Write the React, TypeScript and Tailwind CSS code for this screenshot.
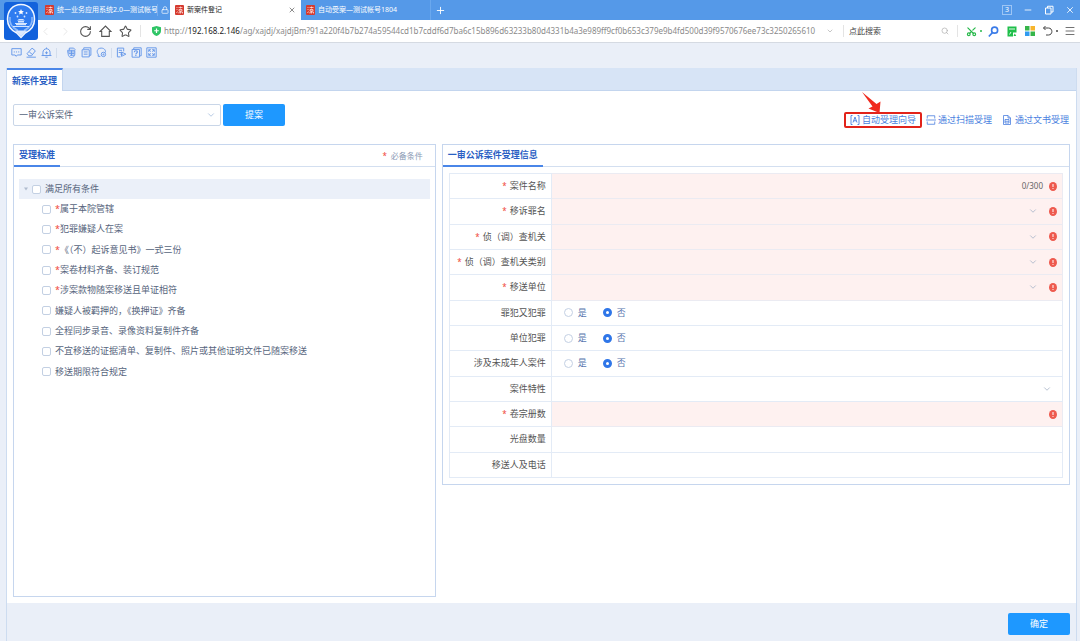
import type { ReactNode } from "react";
import {
  ChevronDown,
  ChevronLeft,
  ChevronRight,
  Lock,
  Menu,
  Minus,
  Plus,
  RotateCw,
  Scissors,
  Search,
  Star,
  X,
} from "lucide-react";

const conditions = [
  { text: "属于本院管辖", required: true },
  { text: "犯罪嫌疑人在案", required: true },
  { text: "《（不）起诉意见书》一式三份", required: true },
  { text: "案卷材料齐备、装订规范", required: true },
  { text: "涉案款物随案移送且单证相符", required: true },
  { text: "嫌疑人被羁押的，《换押证》齐备", required: false },
  { text: "全程同步录音、录像资料复制件齐备", required: false },
  { text: "不宜移送的证据清单、复制件、照片或其他证明文件已随案移送", required: false },
  { text: "移送期限符合规定", required: false },
];

type Field = {
  id: string;
  label: string;
  kind: "text" | "select" | "radio";
  required?: boolean;
  counter?: string;
};

const fields: Field[] = [
  { id: "name", label: "案件名称", kind: "text", required: true, counter: "0/300" },
  { id: "charge", label: "移诉罪名", kind: "select", required: true },
  { id: "agency", label: "侦（调）查机关", kind: "select", required: true },
  { id: "agency-type", label: "侦（调）查机关类别", kind: "select", required: true },
  { id: "unit", label: "移送单位", kind: "select", required: true },
  { id: "repeat", label: "罪犯又犯罪", kind: "radio" },
  { id: "corporate", label: "单位犯罪", kind: "radio" },
  { id: "minor", label: "涉及未成年人案件", kind: "radio" },
  { id: "trait", label: "案件特性", kind: "select" },
  { id: "volumes", label: "卷宗册数", kind: "text", required: true },
  { id: "discs", label: "光盘数量", kind: "text" },
  { id: "contact", label: "移送人及电话", kind: "text" },
];

function Glyph({ children }: { children: ReactNode }) {
  return (
    <svg
      viewBox="0 0 20 20"
      className="size-[11px]"
      fill="none"
      stroke="currentColor"
      strokeWidth="1.8"
      aria-hidden="true"
    >
      {children}
    </svg>
  );
}

function Emblem() {
  return (
    <svg viewBox="0 0 34 38" className="h-[38px] w-[34px]" aria-hidden="true">
      <rect width="34" height="38" rx="3" fill="#1262dc" />
      <path
        d="M17 2.5C8.5 2.5 3.500 9 3.500 17.200c0 6.800 4 11.300 9.300 13.800L17 35.500l4.200-4.500c5.300-2.500 9.300-7 9.300-13.800C30.500 9 25.500 2.500 17 2.500z"
        fill="#2f7cf0"
        stroke="#f2f7ff"
        strokeWidth="1.500"
      />
      <path
        d="M6 15c-1 6.500 2.500 11 8 13.500M28 15c1 6.500-2.500 11-8 13.500"
        fill="none"
        stroke="#8dbafa"
        strokeWidth="1.500"
      />
      <path d="M17 7l.9 1.900 2 .3-1.500 1.400.4 2-1.800-1-1.800 1 .4-2-1.500-1.400 2-.3z" fill="#fff" />
      <g fill="#d5e6ff">
        <circle cx="11.500" cy="11" r=".9" />
        <circle cx="22.500" cy="11" r=".9" />
        <circle cx="13.500" cy="14.500" r=".9" />
        <circle cx="20.500" cy="14.500" r=".9" />
        <path d="M13 18.500l2-1.500h4l2 1.500zM14 19h6v1.500h-6zM11 21h12v1H11zM12 22h10v1.200H12zM9 24h16v1H9z" />
      </g>
      <path d="M11 28.500h12l-6 6z" fill="#dceaff" />
    </svg>
  );
}

function Favicon() {
  return (
    <svg viewBox="0 0 18 20" className="h-[10px] w-[9px] shrink-0" aria-hidden="true">
      <rect width="18" height="20" rx="2" fill="#d63a2e" />
      <path
        d="M3 5h2M3 9h2M3 16l2-3M7 5h8M11 3v4M8 9h6v3H8zM8 17v-3h7v3M11 12v5"
        stroke="#ffe2dc"
        strokeWidth="1.500"
        fill="none"
      />
    </svg>
  );
}

function ErrorMark() {
  return (
    <svg viewBox="0 0 16 18" className="h-[9px] w-2 shrink-0" aria-label="必填">
      <ellipse cx="8" cy="9" rx="8" ry="9" fill="#ee5a4e" />
      <path d="M8 4v6" stroke="#fff" strokeWidth="2" />
      <circle cx="8" cy="13" r="1.200" fill="#fff" />
    </svg>
  );
}

function TitleBar() {
  return (
    <div className="flex h-5 items-center bg-[#5599e8] pl-[45px] text-[7px] text-white">
      <div className="flex w-[125px] items-center gap-[3px]">
        <Favicon />
        <span className="w-[101px] overflow-hidden border-r border-[#74adee] whitespace-nowrap">
          统一业务应用系统2.0—测试帐号
        </span>
        <Lock className="size-2" />
      </div>
      <div className="flex h-full w-[131px] items-center gap-[3px] bg-white px-[5px] text-[#222]">
        <Favicon />
        <span className="flex-1">新案件登记</span>
        <button aria-label="关闭标签页">
          <X className="size-2 text-[#555]" />
        </button>
      </div>
      <div className="flex h-full w-[130px] items-center gap-[3px] border-r border-[#6aa8ee] pl-[5px]">
        <Favicon />
        <span>自动受案—测试帐号1804</span>
      </div>
      <button className="ml-1 flex-none" aria-label="新建标签页">
        <Plus className="size-[11px]" strokeWidth={2} />
      </button>
      <div className="ml-auto flex items-center gap-[11px] pr-[5px]">
        <span className="flex h-[10px] w-[10px] items-center justify-center border border-[#9cc5f5]">3</span>
        <button aria-label="最小化"><Minus className="size-[10px]" strokeWidth={2} /></button>
        <button aria-label="还原">
          <svg viewBox="0 0 20 20" className="size-[10px]" fill="none" stroke="currentColor" strokeWidth="2">
            <path d="M3 6h11v12H3zM7 6V2.500h11V14h-4" />
          </svg>
        </button>
        <button aria-label="关闭"><X className="size-[10px]" strokeWidth={2} /></button>
      </div>
    </div>
  );
}

function AddressBar() {
  return (
    <div className="flex h-[23px] items-center border-b border-[#d5dae2] bg-white pr-1 pl-[39px] text-[8px] text-[#8a8a8a]">
      <div className="flex items-center gap-[7px]">
        <ChevronLeft className="size-[13px] text-[#e2e2e2]" strokeWidth={1.5} />
        <ChevronRight className="size-[13px] text-[#e2e2e2]" strokeWidth={1.5} />
        <RotateCw className="size-[13px] text-[#555]" strokeWidth={2} />
        <svg viewBox="0 0 24 24" className="size-[13px]" fill="none" stroke="#555" strokeWidth="2" aria-hidden="true">
          <path d="M2 12L12 2l10 10h-3v9H5v-9z" />
        </svg>
        <Star className="size-[13px] text-[#555]" strokeWidth={2} />
      </div>
      <div className="ml-2 h-3 w-px bg-[#e4e4e4]" />
      <svg viewBox="0 0 18 20" className="ml-[11px] h-[10px] w-[9px] shrink-0" aria-hidden="true">
        <path d="M9 0l9 2.500V10c0 5-4 8-9 10-5-2-9-5-9-10V2.500z" fill="#2fc566" />
        <path d="M9 5v9M4.500 9.500h9" stroke="#fff" strokeWidth="2.400" />
      </svg>
      <div className="ml-[3px] min-w-0 flex-1 overflow-hidden whitespace-nowrap">
        http://<span className="text-[#222]">192.168.2.146</span>
        /ag/xajdj/xajdjBm?91a220f4b7b274a59544cd1b7cddf6d7ba6c15b896d63233b80d4331b4a3e989ff9cf0b653c379e9b4fd500d39f9570676ee73c3250265610
      </div>
      <ChevronDown className="mr-[9px] size-2 text-[#aaa]" />
      <div className="h-3 w-px bg-[#e4e4e4]" />
      <input
        aria-label="搜索"
        placeholder="点此搜索"
        className="ml-[5px] w-[92px] outline-none placeholder:text-[#444]"
      />
      <Search className="size-2 text-[#aaa]" />
      <div className="ml-2 h-3 w-px bg-[#e4e4e4]" />
      <Scissors className="ml-2 size-[11px] -rotate-90 text-[#27b84a]" strokeWidth={2.5} />
      <span className="ml-[3px] size-[2px] rounded-full bg-[#27b84a]" />
      <svg viewBox="0 0 20 20" className="ml-[6px] size-[11px]" fill="none" stroke="#3a7be8" strokeWidth="3" aria-hidden="true">
        <circle cx="12" cy="7.500" r="5.500" />
        <path d="M8 12l-6.500 7" />
      </svg>
      <svg viewBox="0 0 20 22" className="ml-2 h-[11px] w-[10px]" aria-hidden="true">
        <path d="M1 1h18v12h-7v8H1z" fill="#1fbf4a" />
        <path d="M4 6h12M5 17l3-5" stroke="#fff" strokeWidth="1.800" />
        <path d="M13 20l2.500-5 3 5z" fill="#1fbf4a" />
      </svg>
      <svg viewBox="0 0 20 20" className="ml-2 size-[10px]" aria-hidden="true">
        <path d="M0 0h9v9H0z" fill="#36b54a" />
        <path d="M11 0h9v9h-9z" fill="#f7b52c" />
        <path d="M0 11h9v9H0z" fill="#2f9bf0" />
        <path d="M11 11h9v9h-9z" fill="#36b54a" />
      </svg>
      <svg viewBox="0 0 20 20" className="ml-2 size-[10px]" fill="none" stroke="#444" strokeWidth="2" aria-hidden="true">
        <path d="M5 0L1 4l4 4M1 4h10c9 0 9 14 0 14H6" />
      </svg>
      <span className="ml-[3px] size-[2px] rounded-full bg-[#444]" />
      <Menu className="ml-[6px] size-3 text-[#444]" strokeWidth={1.5} />
    </div>
  );
}

function Toolbar() {
  return (
    <div className="flex h-[25px] items-center gap-1 pb-[6px] pl-[11px] text-[#6a9bea]">
      <button aria-label="消息">
        <Glyph>
          <path d="M1.500 3h17v11.500h-7L9.500 17l-2-2.500h-6zM5 9h2M9 9h2M13 9h2" />
        </Glyph>
      </button>
      <button aria-label="签名">
        <Glyph>
          <path d="M2 12L11 2l6 5-7 9H5zM6 9l6 5M1 18.500h17" />
        </Glyph>
      </button>
      <button aria-label="提醒">
        <Glyph>
          <path d="M1 15.500h18M3.500 15.500V10c0-9 13-9 13 0v5.500M8 18.500h4M10 1v2.500M10 8v5M7.500 10.500h5" />
        </Glyph>
      </button>
      <div className="mr-[5px] h-[10px] w-px bg-[#d3ddec]" />
      <button aria-label="记录">
        <Glyph>
          <path d="M3 6h13v7c0 4-3 6-6 6s-6-2-6-6zM6 6V2h8l3 3M3 9h13M5 12h10M7 15h8M10 6v10" />
        </Glyph>
      </button>
      <button aria-label="文档">
        <Glyph>
          <path d="M5 4V1.500h13V15h-3M2 5h13v13H2zM5 9h7M5 13h7" />
        </Glyph>
      </button>
      <button aria-label="用户设置">
        <Glyph>
          <path d="M8 17H4v-4C1 10 1 2 9.500 2 16 2 18 7 17 10" />
          <circle cx="13.500" cy="13.500" r="4" />
          <circle cx="13.500" cy="13.500" r="1" />
        </Glyph>
      </button>
      <div className="h-[10px] w-px bg-[#d3ddec]" />
      <button aria-label="导出">
        <Glyph>
          <path d="M8 18H2.500V2H14v6M5 6h6M5 10h4M10 9v8l8-4zM8 13h5" />
        </Glyph>
      </button>
      <button aria-label="帮助">
        <Glyph>
          <path d="M5 4V1.500h13.500V16H16M2 4.500h13.500v14H2z" />
          <path d="M6 9.500c0-3.500 5.500-3.500 5.500-.5 0 2-2.700 2-2.700 4.500M8.800 14.500v2" strokeWidth="2.200" />
        </Glyph>
      </button>
      <button aria-label="全屏">
        <Glyph>
          <path d="M1.500 1.500h17v17h-17zM5 9V5h4M5 5l3.500 3.500M15 9V5h-4M15 5l-3.500 3.500M5 11v4h4M5 15l3.500-3.500M15 11v4h-4M15 15l-3.500-3.500" />
        </Glyph>
      </button>
    </div>
  );
}

function AcceptLinks() {
  return (
    <div className="relative flex items-center gap-1 self-end pr-px text-[#4a7fe0]">
      <a href="#auto" className="flex h-4 items-center gap-[2px] rounded-xs border-2 border-[#e2231a] px-1">
        <svg viewBox="0 0 20 20" className="size-[10px]" fill="none" stroke="currentColor" strokeWidth="1.800" aria-hidden="true">
          <path d="M5 1H2v18h3M15 1h3v18h-3M6 15l4-11 4 11M7.500 11.500h5" />
        </svg>
        自动受理向导
      </a>
      <a href="#scan" className="flex items-center gap-[2px]">
        <svg viewBox="0 0 20 20" className="size-[10px]" fill="none" stroke="currentColor" strokeWidth="1.600" aria-hidden="true">
          <path d="M2.500 7V1.500h15V7M2.500 13v5.500h15V13M0 10h20" />
        </svg>
        通过扫描受理
      </a>
      <a href="#doc" className="ml-[6px] flex items-center gap-[3px]">
        <svg viewBox="0 0 20 20" className="size-[10px]" fill="none" stroke="currentColor" strokeWidth="1.600" aria-hidden="true">
          <path d="M3 1h9l5 5v13H3zM12 1v5h5M6 9h8v7H6zM6 12.500h8" />
        </svg>
        通过文书受理
      </a>
      <svg viewBox="0 0 20 22" className="absolute -top-5 left-[18px] h-[22px] w-5" aria-hidden="true">
        <path d="M0 0L14.500 12 18.500 9.500 17.500 21 6.500 16.500 10.500 14.500z" fill="#f02a1e" />
      </svg>
    </div>
  );
}

function CriteriaPanel() {
  return (
    <section className="w-2/5 shrink-0 border border-[#c6d6ee]">
      <header className="flex h-[22px] items-stretch justify-between border-b border-[#d3dff0]">
        <h2 className="-mb-px flex items-center border-b-2 border-[#4a86e8] px-[5px] font-bold text-[#2a5fc4]">
          受理标准
        </h2>
        <span className="flex items-center gap-1 pr-3 text-[8px] text-[#8b9bb5]">
          <span className="text-[#f0453a]">*</span>必备条件
        </span>
      </header>
      <div className="px-[5px] pt-3 text-[#56647c]">
        <label className="flex h-5 items-center gap-1 bg-[#ebf0f9] pl-[5px]">
          <svg viewBox="0 0 8 8" className="size-1 text-[#b0bccf]" aria-hidden="true">
            <path d="M0 1h8L4 7z" fill="currentColor" />
          </svg>
          <input type="checkbox" className="size-[9px] appearance-none rounded-xs border border-[#c3d0e3] bg-white" />
          满足所有条件
        </label>
        <ul className="grid h-[183px] auto-rows-fr pl-[23px]">
          {conditions.map((c) => (
            <li key={c.text} className="flex items-center">
              <label className="flex items-center gap-1">
                <input type="checkbox" className="size-[9px] appearance-none rounded-xs border border-[#c3d0e3] bg-white" />
                <span>
                  {c.required && <span className="text-[#f0453a]">*</span>}
                  {c.text}
                </span>
              </label>
            </li>
          ))}
        </ul>
      </div>
    </section>
  );
}

function FieldControl({ field }: { field: Field }) {
  if (field.kind === "radio") {
    return (
      <div className="flex h-5 items-center gap-4 pl-3 text-[#5673ad]">
        {["是", "否"].map((option) => (
          <label key={option} className="flex items-center gap-[5px]">
            <input
              type="radio"
              name={field.id}
              id={option === "是" ? field.id : undefined}
              defaultChecked={option === "否"}
              className="size-[9px] appearance-none rounded-full border border-[#c3d0e3] bg-white checked:border-[3px] checked:border-[#2f76e8]"
            />
            {option}
          </label>
        ))}
      </div>
    );
  }
  return (
    <div className="flex h-5 items-center gap-[6px] pr-[5px]">
      {field.kind === "select" ? (
        <div className="grid flex-1 items-center pr-[5px]">
          <select id={field.id} className="col-start-1 row-start-1 h-5 w-full appearance-none outline-none">
            <option value=""></option>
          </select>
          <ChevronDown className="pointer-events-none col-start-1 row-start-1 size-[10px] justify-self-end text-[#a9b6c9]" />
        </div>
      ) : (
        <input id={field.id} className="h-5 min-w-0 flex-1 outline-none" />
      )}
      {field.counter && <span className="text-[8px] text-[#666]">{field.counter}</span>}
      {field.required && <ErrorMark />}
    </div>
  );
}

function InfoPanel() {
  return (
    <section className="min-w-0 flex-1 self-start border border-[#c6d6ee]">
      <header className="flex h-[22px] items-stretch border-b border-[#d3dff0]">
        <h2 className="-mb-px flex items-center border-b-2 border-[#4a86e8] px-[5px] font-bold text-[#2a5fc4]">
          一审公诉案件受理信息
        </h2>
      </header>
      <div className="px-[6px] pt-[6px] pb-[6px]">
        <table className="h-[305px] w-full border-collapse">
          <tbody>
            {fields.map((field) => (
              <tr key={field.id}>
                <th className="w-[102px] border border-[#e3ebf6] p-0 pr-[5px] text-right font-normal text-[#555]">
                  {field.required && <span className="mr-[3px] text-[8px] text-[#f0453a]">*</span>}
                  <label htmlFor={field.id}>{field.label}</label>
                </th>
                <td className={field.required ? "border border-[#ebebf2] bg-[#fef1f0] p-0" : "border border-[#e3ebf6] p-0"}>
                  <FieldControl field={field} />
                </td>
              </tr>
            ))}
          </tbody>
        </table>
      </div>
    </section>
  );
}

export default function App() {
  return (
    <div className="relative flex min-h-screen flex-col bg-[#eaeff8] font-['Noto_Sans','Noto_Sans_CJK_SC',sans-serif] text-[9px] leading-3">
      <TitleBar />
      <AddressBar />
      <div className="absolute top-[2px] left-1">
        <Emblem />
      </div>
      <Toolbar />

      <main className="mr-[3px] ml-[6px] flex flex-1 flex-col border-x border-[#cddcf0]">
        <nav className="flex h-[23px] border-b border-[#c3d5ee] bg-[#d7e4f6]">
          <a
            href="#new"
            className="-mb-px flex items-center border-t-2 border-r border-t-[#4a86e8] border-r-[#c3d5ee] bg-white px-[5px] font-bold text-[#2a5fc4]"
          >
            新案件受理
          </a>
        </nav>
        <div className="flex flex-1 flex-col bg-white pt-[13px] pr-[6px] pb-[6px] pl-[6px]">
          <div className="mb-4 flex h-6 items-start justify-between">
            <form className="flex gap-[2px]">
              <div className="grid w-52 items-center">
                <select
                  aria-label="案件类型"
                  className="col-start-1 row-start-1 h-[22px] appearance-none rounded-xs border border-[#c9d6e8] bg-white px-[5px] text-[#56647c]"
                >
                  <option>一审公诉案件</option>
                </select>
                <ChevronDown className="pointer-events-none col-start-1 row-start-1 mr-[5px] size-[10px] justify-self-end text-[#a9c0e0]" />
              </div>
              <button type="button" className="h-[22px] w-[62px] rounded-xs bg-[#1e98ff] text-white">
                提案
              </button>
            </form>
            <AcceptLinks />
          </div>
          <div className="flex flex-1 gap-[6px]">
            <CriteriaPanel />
            <InfoPanel />
          </div>
        </div>
        <footer className="flex justify-end pt-[10px] pr-[6px] pb-[6px]">
          <button className="h-[22px] w-[62px] rounded-xs bg-[#1e98ff] text-white">确定</button>
        </footer>
      </main>
    </div>
  );
}
